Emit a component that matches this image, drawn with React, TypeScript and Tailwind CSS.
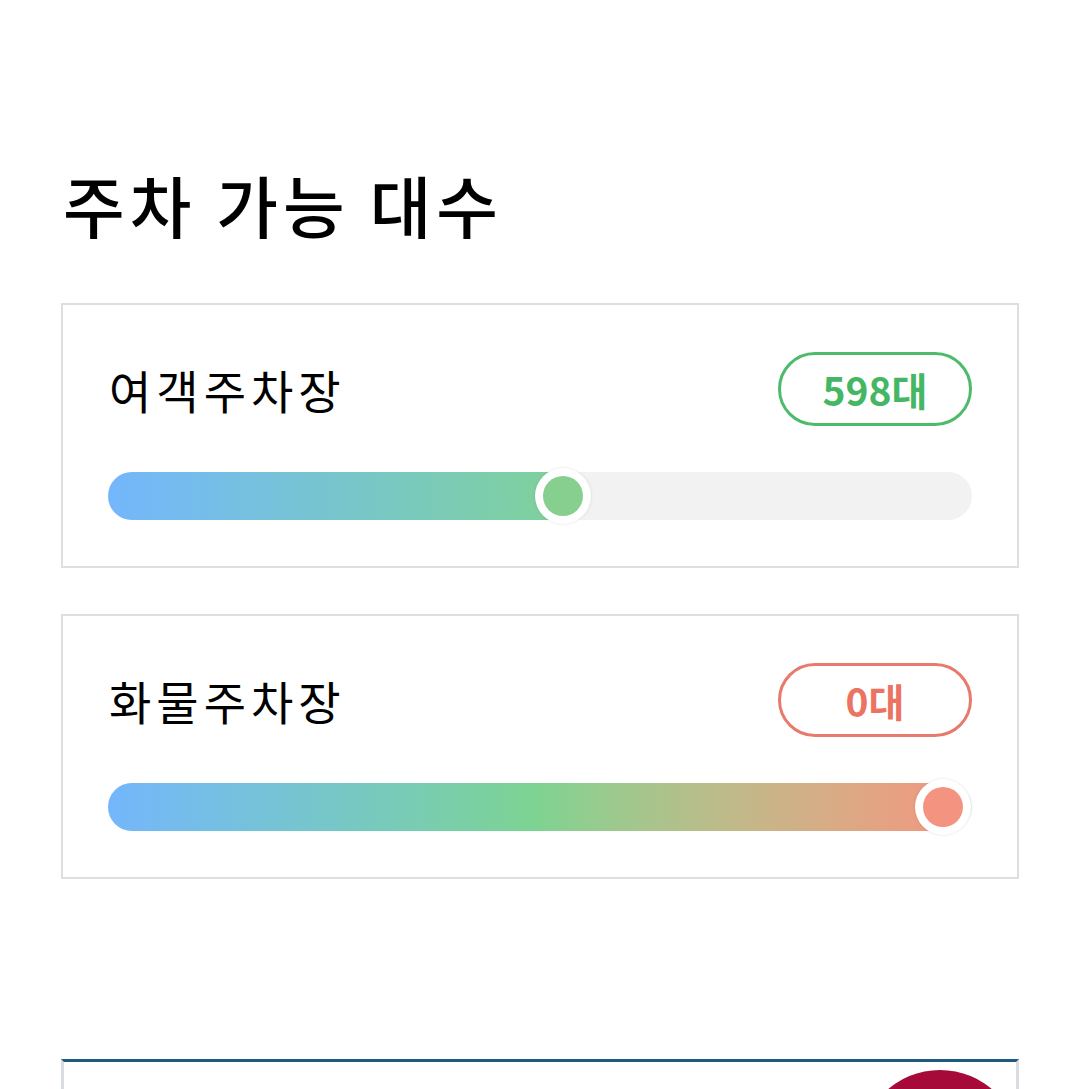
import React from "react";

const font = { fontFamily: '"Noto Sans CJK KR", "Noto Sans", sans-serif' };

type Lot = {
  name: string;
  count: string;
  pct: number;
  badge: string;
  bar: string;
  knob: string;
};

const lots: Lot[] = [
  {
    name: "여객주차장",
    count: "598대",
    pct: 0.529,
    badge: "border-[#4dbb6b] text-[#45b764]",
    bar: "bg-gradient-to-r from-[#74b6fc] to-[#80d294]",
    knob: "bg-[#86cf8f]",
  },
  {
    name: "화물주차장",
    count: "0대",
    pct: 1,
    badge: "border-[#e77a6c] text-[#ec7361]",
    bar: "bg-gradient-to-r from-[#74b6fc] via-[#7dd391] to-[#f49580]",
    knob: "bg-[#f4937f]",
  },
];

function LotCard({ lot }: { lot: Lot }) {
  // knob is 56px wide, travels inside the 863px track
  const center = 28 + lot.pct * (863 - 56);
  return (
    <div className="border-2 border-[#dedede] bg-white px-[45px] pt-[47px] pb-[46px]">
      <div className="flex h-[74px] items-center justify-between">
        <span className="pl-[1px] text-[46px] leading-none tracking-[5px] text-black">{lot.name}</span>
        <span
          className={`flex h-[74px] w-[194px] items-center justify-center rounded-full border-[3px] text-[39px] font-bold leading-none ${lot.badge}`}
        >
          {lot.count}
        </span>
      </div>
      <div className="relative mt-[46px] h-[48px] rounded-full bg-[#f2f2f2]">
        <div className={`h-full rounded-full ${lot.bar}`} style={{ width: center + 20 }} />
        <div
          className="absolute top-[-4px] flex h-[56px] w-[56px] items-center justify-center rounded-full bg-white shadow-[0_0_3px_rgba(0,0,0,0.12)]"
          style={{ left: center - 28 }}
        >
          <div className={`h-[40px] w-[40px] rounded-full ${lot.knob}`} />
        </div>
      </div>
    </div>
  );
}

export default function App() {
  return (
    <div className="h-[1089px] w-[1080px] overflow-hidden bg-white" style={font}>
      <div className="pl-[61px] pr-[61px] pt-[170px]">
        <h1 className="pl-[2px] text-[67px] font-medium leading-none tracking-[5px] text-black">주차 가능 대수</h1>
        <div className="mt-[66px] flex flex-col gap-[46px]">
          {lots.map((l) => (
            <LotCard key={l.name} lot={l} />
          ))}
        </div>
        <div className="relative mt-[180px] h-[200px] overflow-hidden border-x-[3px] border-t-[3px] border-x-[#d8dce0] border-t-[#1d5a80] bg-white">
          <div className="absolute left-[796px] top-[8px] h-[160px] w-[160px] rounded-full bg-[#a50a38]" />
        </div>
      </div>
    </div>
  );
}
